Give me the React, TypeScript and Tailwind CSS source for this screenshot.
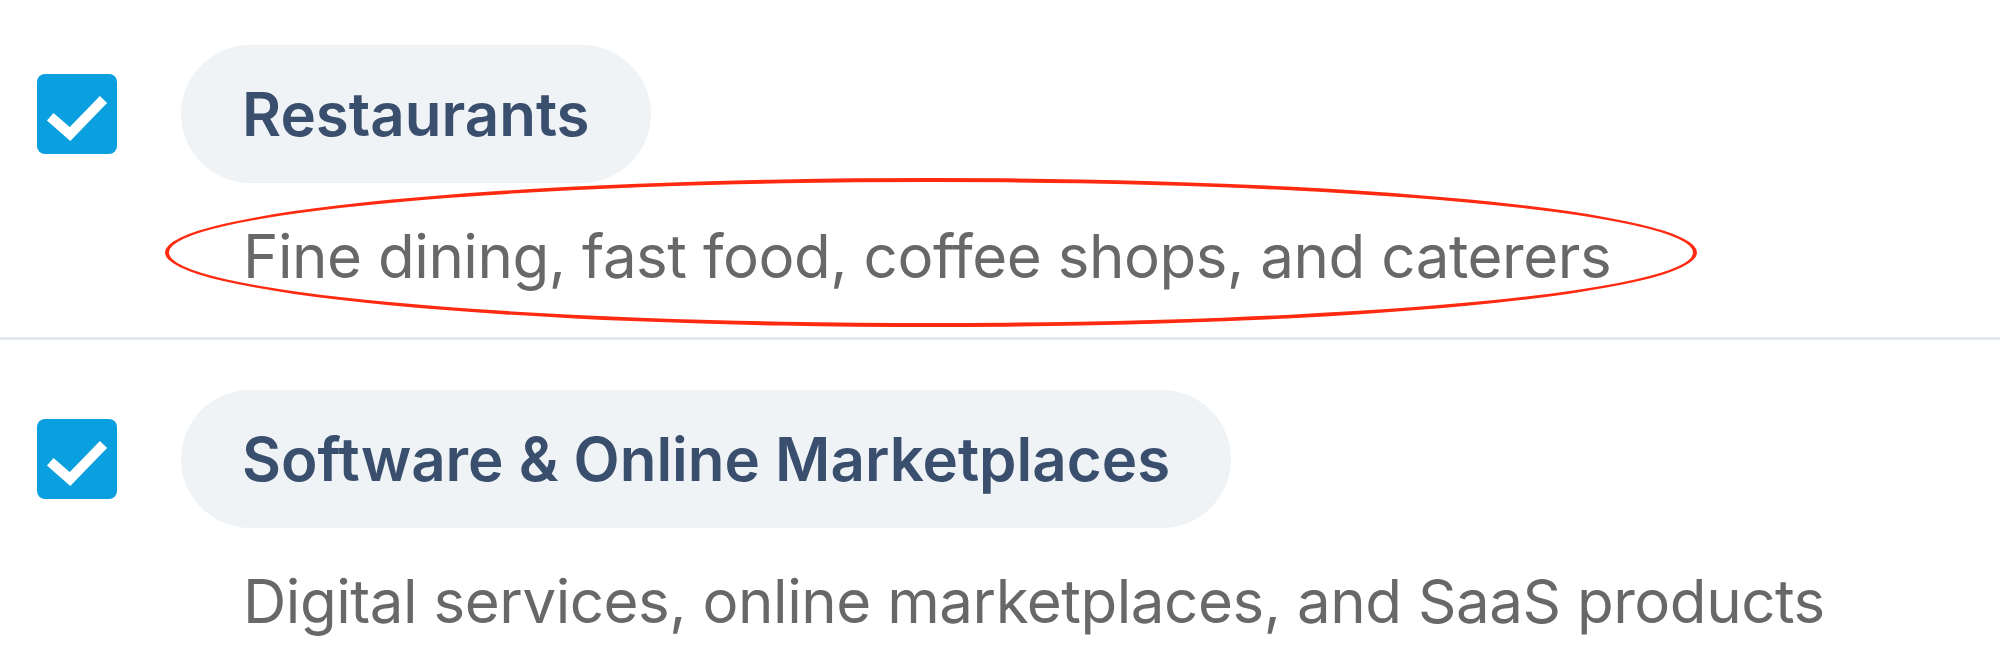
import React from "react";

type Category = {
  id: string;
  name: string;
  description: string;
  checked: boolean;
  highlighted?: boolean;
};

const categories: Category[] = [
  {
    id: "restaurants",
    name: "Restaurants",
    description: "Fine dining, fast food, coffee shops, and caterers",
    checked: true,
    highlighted: true,
  },
  {
    id: "software",
    name: "Software & Online Marketplaces",
    description: "Digital services, online marketplaces, and SaaS products",
    checked: true,
  },
];

function CheckBox({ checked }: { checked: boolean }) {
  return (
    <span
      className={
        "flex h-[80px] w-[80px] shrink-0 items-center justify-center rounded-[8px] " +
        (checked ? "bg-[#0a9fdf]" : "border-2 border-gray-300 bg-white")
      }
    >
      {checked && (
        <svg width="80" height="80" viewBox="0 0 80 80" fill="none">
          <path
            d="M17 46 L33 60 L63 29"
            stroke="white"
            strokeWidth="10"
            strokeLinecap="square"
            strokeLinejoin="miter"
          />
        </svg>
      )}
    </span>
  );
}

function CategoryRow({ category, last }: { category: Category; last: boolean }) {
  return (
    <div
      className={
        "pl-[37px] " +
        (last ? "pt-[50px] pb-10" : "border-b-[3px] border-[#e3e9ee] pt-[45px] pb-[45px]")
      }
    >
      <label className="flex items-center gap-[64px]">
        <CheckBox checked={category.checked} />
        <span className="rounded-full bg-[#eff3f6] px-[61px] py-[33px] text-[60px] leading-[72px] font-semibold text-[#3a4e6d]">
          {category.name}
        </span>
      </label>
      <div className="mt-[37px] pl-[206px]">
        <p className="relative inline-block text-[60px] leading-[72px] tracking-[-0.45px] text-[#686868]">
          {category.description}
          {category.highlighted && (
            <span className="pointer-events-none absolute -top-[42px] -bottom-[35px] -left-[78px] -right-[86px] rounded-[50%] border-[4px] border-[#ff2a10]" />
          )}
        </p>
      </div>
    </div>
  );
}

export default function App() {
  return (
    <div
      className="min-h-screen w-full bg-white"
      style={{ fontFamily: "Inter, 'Noto Sans', sans-serif" }}
    >
      {categories.map((c, i) => (
        <CategoryRow key={c.id} category={c} last={i === categories.length - 1} />
      ))}
    </div>
  );
}
